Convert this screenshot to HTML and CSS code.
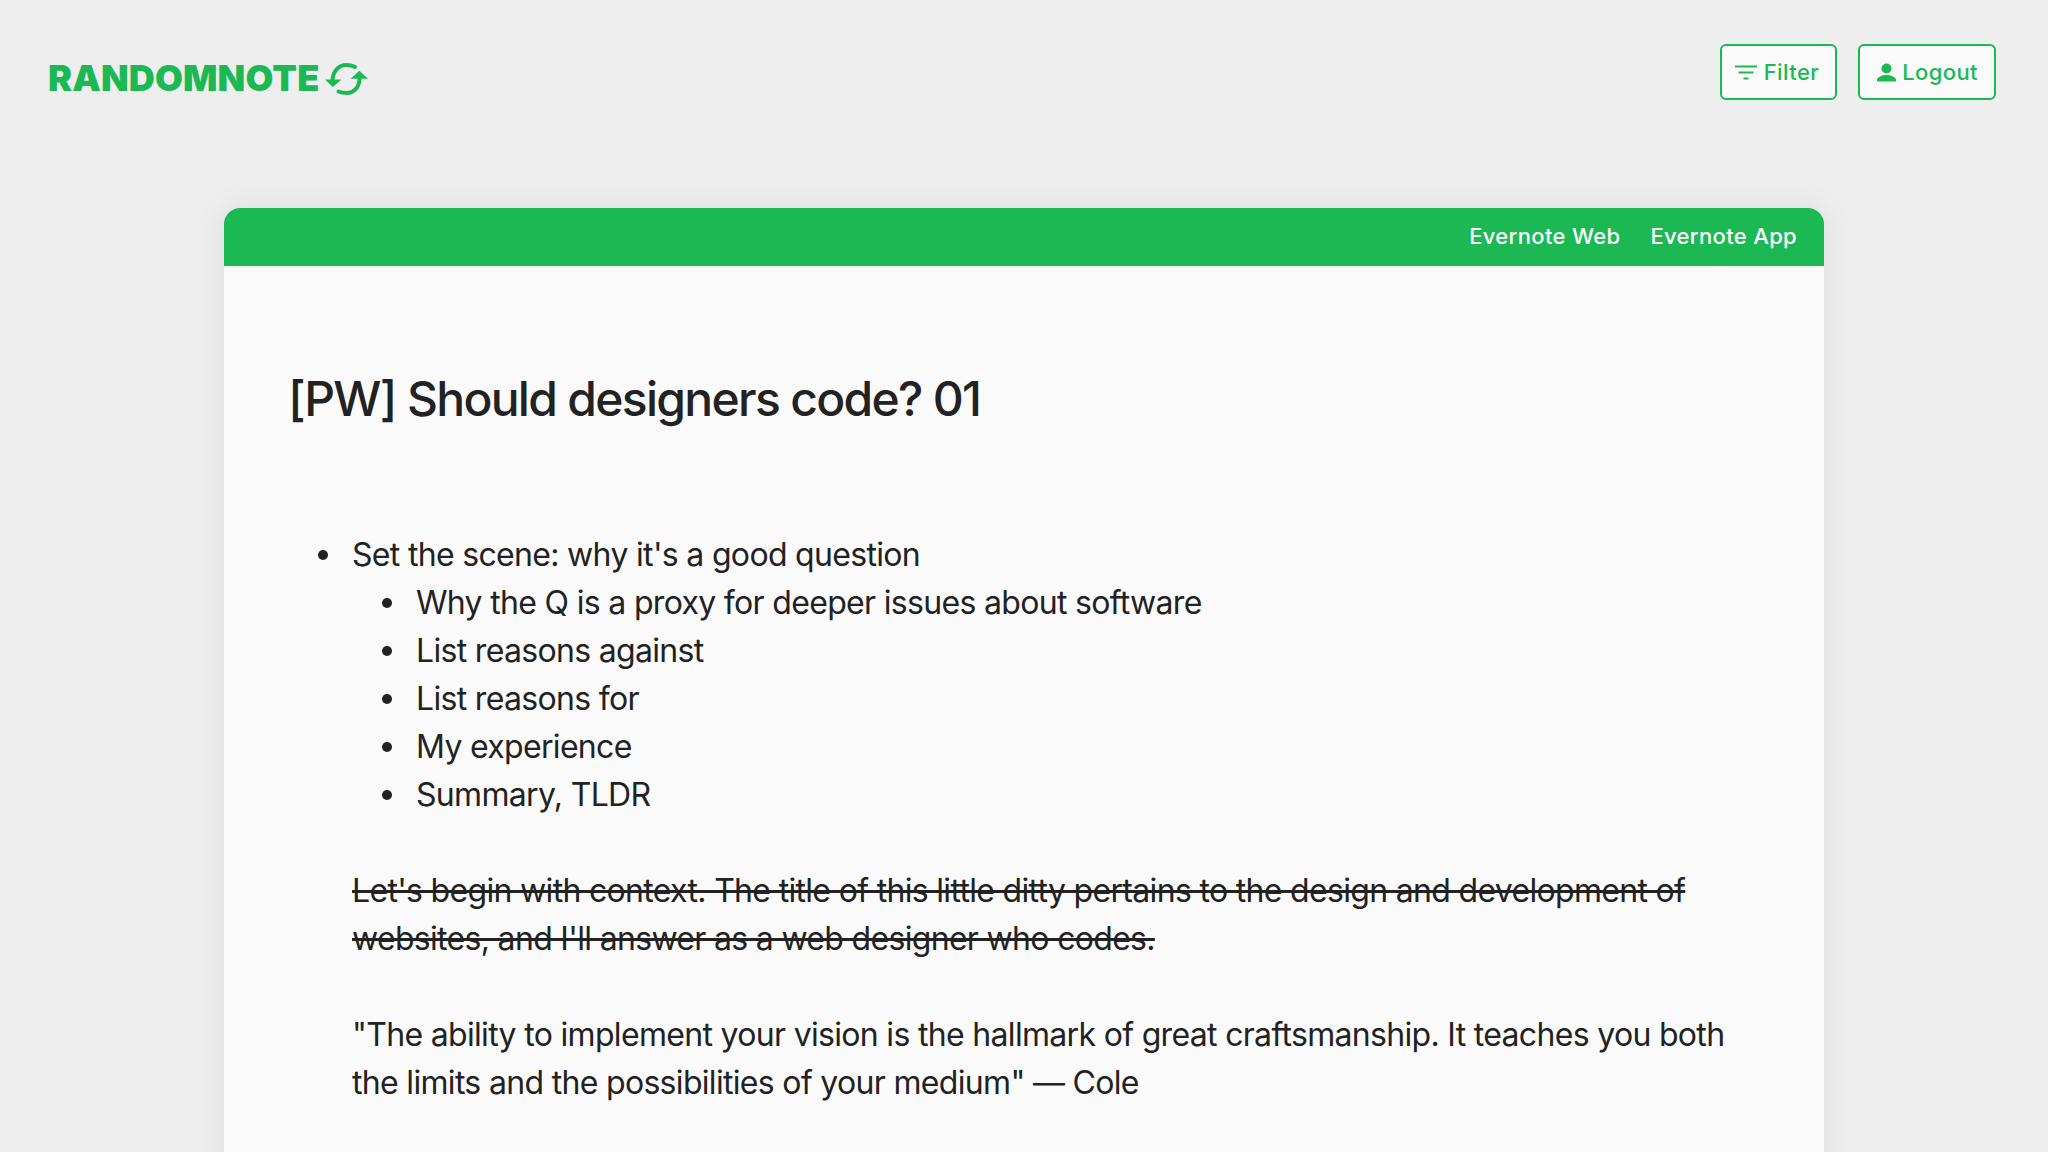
FILE: index.html
```html
<!DOCTYPE html>
<html>
<head>
  <meta charset="UTF-8">
  <title>RandomNote</title>
  <link rel="stylesheet" href="styles.css">
</head>
<body>
  <header class="topbar">
    <a class="logo">RANDOMNOTE
      <svg class="logo-icon" viewBox="0 0 43 32" width="43" height="32" fill="none">
        <path d="M7.500 17C8 8 14 2 21 2c3.500 0 6.500.5 9 2" stroke="#1bb854" stroke-width="4" stroke-linecap="round"/>
        <path d="M0 16.500h16.500L7.800 24z" fill="#1bb854"/>
        <path d="M34.500 15.500C34.500 24 29 30 22 30c-3 0-6-.3-8.500-1.500" stroke="#1bb854" stroke-width="4" stroke-linecap="round"/>
        <path d="M43 15.700H25.700L34.300 7.700z" fill="#1bb854"/>
      </svg>
    </a>
    <nav class="actions">
      <button class="btn">
        <svg viewBox="0 0 24 24" width="24" height="24" fill="#1bb854"><path d="M1 5.500h22v2H1zM4.500 11.500h15v2h-15zM9.500 17.500h5v2h-5z"/></svg>
        Filter
      </button>
      <button class="btn">
        <svg viewBox="0 0 24 24" width="24" height="24" fill="#1bb854"><circle cx="14.500" cy="8.500" r="5"/><path d="M5 21.500v-1.500c0-3 5.500-5 9.500-5s9.500 2 9.500 5v1.500z"/></svg>
        Logout
      </button>
    </nav>
  </header>

  <main class="card">
    <div class="card-bar">
      <a>Evernote Web</a>
      <a>Evernote App</a>
    </div>
    <div class="card-body">
      <h1>[PW] Should designers code? 01</h1>
      <ul>
        <li>Set the scene: why it's a good question
          <ul>
            <li>Why the Q is a proxy for deeper issues about software</li>
            <li>List reasons against</li>
            <li>List reasons for</li>
            <li>My experience</li>
            <li>Summary, TLDR</li>
          </ul>
        </li>
      </ul>
      <p class="note"><s>Let's begin with context. The title of this little ditty pertains to the design and development of websites, and I'll answer as a web designer who codes.</s></p>
      <p class="note">"The ability to implement your vision is the hallmark of great craftsmanship. It teaches you both the limits and the possibilities of your medium" — Cole</p>
    </div>
  </main>
</body>
</html>
```

FILE: styles.css
```css
html, body {
  height: 1152px;
  overflow: hidden;
}
body {
  margin: 0;
  background-color: #eeeeee;
  font-family: Inter, "Liberation Sans", sans-serif;
  color: #222;
}
.topbar {
  display: flex;
  justify-content: space-between;
  align-items: flex-start;
  padding: 44px 52px 0 48px;
  height: 164px;
  box-sizing: border-box;
}
.logo {
  display: flex;
  align-items: center;
  gap: 6px;
  margin-top: 18px;
  font-size: 36px;
  font-weight: 900;
  letter-spacing: 0.15px;
  color: #1bb854;
  line-height: 33px;
}
.actions {
  display: flex;
  gap: 21px;
}
.btn {
  display: flex;
  align-items: center;
  gap: 6px;
  height: 56px;
  padding: 0 16px 0 12px;
  font-family: inherit;
  font-size: 22px;
  font-weight: 500;
  letter-spacing: 0.4px;
  color: #1bb854;
  background: #fafafa;
  border: 2px solid #1bb854;
  border-radius: 6px;
}
.card {
  width: 1600px;
  margin: 44px auto 0;
  background: #fafafa;
  border-radius: 16px 16px 0 0;
  box-shadow: 0 0 32px rgba(0,0,0,0.08);
  height: 960px;
}
.card-bar {
  display: flex;
  justify-content: flex-end;
  align-items: center;
  gap: 30px;
  height: 56px;
  padding: 0 27px 2px;
  background: #1bb854;
  border-radius: 16px 16px 0 0;
  color: #fff;
  font-size: 22px;
  font-weight: 500;
  letter-spacing: 0.33px;
}
.card-body {
  padding: 101px 64px 0;
  font-size: 32px;
  line-height: 48px;
  letter-spacing: -0.68px;
}
h1 {
  margin: 0 0 100px;
  font-size: 48px;
  line-height: 64px;
  font-weight: 500;
  letter-spacing: -1.7px;
}
ul {
  margin: 0;
  padding-left: 64px;
  list-style: none;
}
li {
  position: relative;
}
li::before {
  content: "";
  position: absolute;
  left: -34px;
  top: 19px;
  width: 10px;
  height: 10px;
  border-radius: 50%;
  background: #222;
}
.note {
  margin: 48px 0 0 64px;
}
```
